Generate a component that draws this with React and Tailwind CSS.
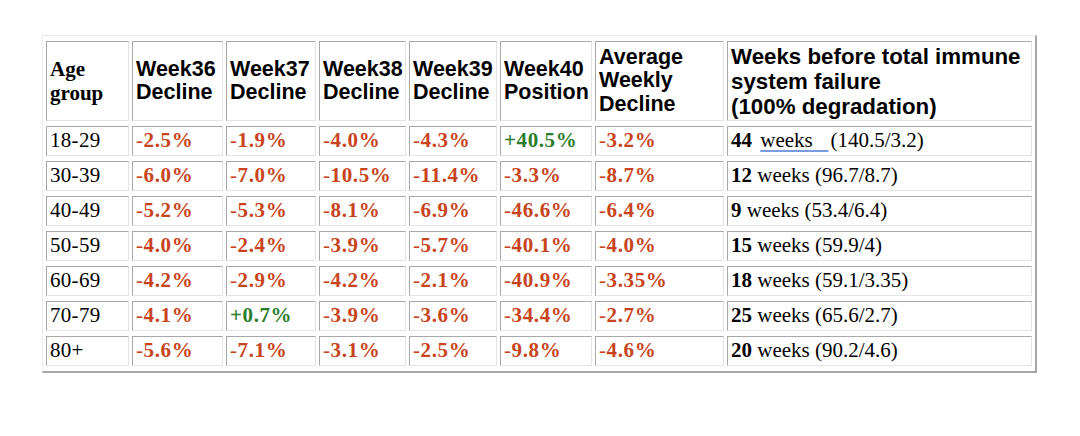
import React from "react";

const RED = "text-[#c8441c]";
const GREEN = "text-[#2b7d2b]";

const rows = [
  ["18-29", ["-2.5%", "-1.9%", "-4.0%", "-4.3%", "+40.5%", "-3.2%"], "44", "(140.5/3.2)", true],
  ["30-39", ["-6.0%", "-7.0%", "-10.5%", "-11.4%", "-3.3%", "-8.7%"], "12", "(96.7/8.7)"],
  ["40-49", ["-5.2%", "-5.3%", "-8.1%", "-6.9%", "-46.6%", "-6.4%"], "9", "(53.4/6.4)"],
  ["50-59", ["-4.0%", "-2.4%", "-3.9%", "-5.7%", "-40.1%", "-4.0%"], "15", "(59.9/4)"],
  ["60-69", ["-4.2%", "-2.9%", "-4.2%", "-2.1%", "-40.9%", "-3.35%"], "18", "(59.1/3.35)"],
  ["70-79", ["-4.1%", "+0.7%", "-3.9%", "-3.6%", "-34.4%", "-2.7%"], "25", "(65.6/2.7)"],
  ["80+", ["-5.6%", "-7.1%", "-3.1%", "-2.5%", "-9.8%", "-4.6%"], "20", "(90.2/4.6)"],
];

const cell =
  "border border-t-[#a8a8a8] border-l-[#a8a8a8] border-b-[#e4e4e4] border-r-[#e4e4e4] px-[3px] flex items-center";

const serif = "font-['Liberation_Serif',serif]";
const sans = "font-['Liberation_Sans',Arial,sans-serif]";
const head = `${cell} ${sans} font-bold text-[21.5px] leading-[23.5px]`;

function Value({ v }) {
  const pos = v.startsWith("+");
  if (pos) return <span className={`${GREEN} font-bold tracking-[0.6px]`}>{v}</span>;
  return (
    <span className={`${RED} font-bold tracking-[0.6px]`}>
      <span className="font-normal">-</span>
      {v.slice(1)}
    </span>
  );
}

export default function App() {
  return (
    <div className="w-[1080px] h-[436px] bg-white overflow-hidden">
      <div className="pl-[42px] pt-[35px]">
        <div className="inline-grid grid-cols-[83px_91px_90px_87px_88px_92px_129px_305px] grid-rows-[80px_repeat(7,30px)] gap-x-[3px] gap-y-[5px] px-[3px] py-[5px] border border-t-[#ececec] border-l-[#ececec] border-b-2 border-r-2 border-b-[#a6a6a6] border-r-[#a6a6a6] text-black">
          <div className={`${cell} ${serif} font-bold text-[21px] leading-[24px]`}>
            <div>
              Age
              <br />
              group
            </div>
          </div>
          {["Week36", "Week37", "Week38", "Week39"].map((w) => (
            <div key={w} className={head}>
              <div>
                {w}
                <br />
                Decline
              </div>
            </div>
          ))}
          <div className={head}>
            <div>
              Week40
              <br />
              Position
            </div>
          </div>
          <div className={head}>
            <div>
              Average
              <br />
              Weekly
              <br />
              Decline
            </div>
          </div>
          <div className={`${cell} ${sans} font-bold text-[22.3px] leading-[25px]`}>
            <div>
              Weeks before total immune
              <br />
              system failure
              <br />
              (100% degradation)
            </div>
          </div>

          {rows.map(([age, vals, wk, calc, underline]) => (
            <React.Fragment key={age}>
              <div className={`${cell} ${serif} text-[21px] tracking-[0.3px]`}>{age}</div>
              {vals.map((v, i) => (
                <div key={i} className={`${cell} ${serif} text-[21px]`}>
                  <Value v={v} />
                </div>
              ))}
              <div className={`${cell} ${serif} text-[21px]`}>
                <span className="whitespace-pre">
                  <span className="font-bold">{wk}</span>
                  {underline ? (
                    <>
                      {" "}
                      <span className="ml-[3px] underline decoration-[#7b9be0] decoration-[1.5px] underline-offset-[3px]">
                        {"weeks   "}
                      </span>
                      <span className="ml-[2px]">{calc}</span>
                    </>
                  ) : (
                    <>{" weeks " + calc}</>
                  )}
                </span>
              </div>
            </React.Fragment>
          ))}
        </div>
      </div>
    </div>
  );
}
